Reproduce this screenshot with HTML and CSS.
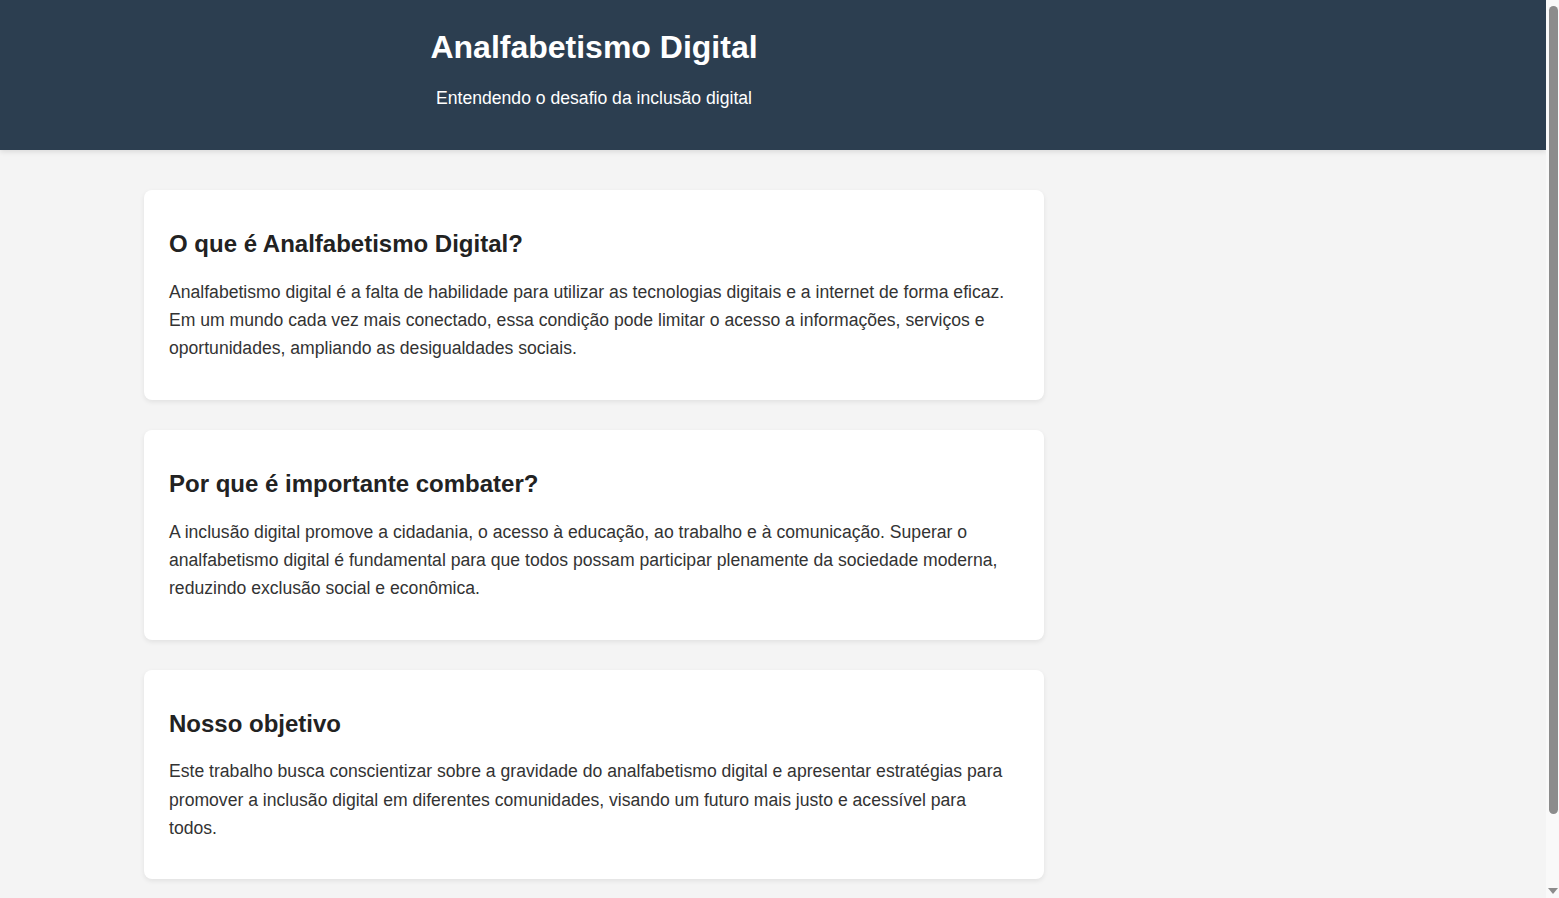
FILE: index.html
```html
<!DOCTYPE html>
<html lang="pt-BR">
<head>
<meta charset="UTF-8">
<title>Analfabetismo Digital</title>
<link rel="stylesheet" href="styles.css">
</head>
<body>
<header class="site-header">
  <div class="container header-inner">
    <h1 class="site-title">Analfabetismo Digital</h1>
    <p class="site-subtitle">Entendendo o desafio da inclusão digital</p>
  </div>
</header>
<main class="container content">
  <section class="card">
    <h2 class="card-title">O que é Analfabetismo Digital?</h2>
    <p class="card-text">Analfabetismo digital é a falta de habilidade para utilizar as tecnologias digitais e a internet de forma eficaz. Em um mundo cada vez mais conectado, essa condição pode limitar o acesso a informações, serviços e oportunidades, ampliando as desigualdades sociais.</p>
  </section>
  <section class="card">
    <h2 class="card-title">Por que é importante combater?</h2>
    <p class="card-text">A inclusão digital promove a cidadania, o acesso à educação, ao trabalho e à comunicação. Superar o analfabetismo digital é fundamental para que todos possam participar plenamente da sociedade moderna, reduzindo exclusão social e econômica.</p>
  </section>
  <section class="card">
    <h2 class="card-title">Nosso objetivo</h2>
    <p class="card-text">Este trabalho busca conscientizar sobre a gravidade do analfabetismo digital e apresentar estratégias para promover a inclusão digital em diferentes comunidades, visando um futuro mais justo e acessível para todos.</p>
  </section>
</main>
<div class="fake-scrollbar" aria-hidden="true">
  <div class="fake-thumb"></div>
  <div class="fake-arrow"></div>
</div>
</body>
</html>
```
FILE: styles.css
```css
* { box-sizing: border-box; }

body {
  margin: 0 13px 0 0;
  font-family: "Liberation Sans", Arial, sans-serif;
  background: #f4f4f4;
  color: #333;
  line-height: 1.6;
}

.container {
  width: 900px;
  margin-left: 144px;
}

.site-header {
  background: #2c3e50;
  color: #fff;
  height: 150px;
  box-shadow: 0 2px 5px rgba(0, 0, 0, 0.1);
}

.header-inner {
  text-align: center;
  padding-top: 29px;
}

.site-title {
  margin: 0;
  font-size: 32px;
  line-height: normal;
  font-weight: bold;
}

.site-subtitle {
  margin: 22px 0 0;
  font-size: 17.6px;
  line-height: normal;
}

.content {
  padding: 40px 0 100px;
  display: flex;
  flex-direction: column;
  gap: 30px;
}

.card {
  background: #fff;
  border-radius: 8px;
  padding: 20px 30px 20px 25px;
  box-shadow: 0 2px 5px rgba(0, 0, 0, 0.08);
}

.card-title {
  margin: 19.92px 0;
  font-size: 24px;
  line-height: normal;
  color: #222;
}

.card-text {
  margin: 0 0 17.6px;
  font-size: 17.6px;
  line-height: 1.6;
  color: #333;
}

.fake-scrollbar {
  position: fixed;
  top: 0;
  right: 0;
  width: 13px;
  height: 100vh;
  background: #f9f9f9;
}

.fake-thumb {
  position: absolute;
  top: 6px;
  left: 3px;
  width: 9px;
  height: 808px;
  background: #8c8c8c;
  border-radius: 5px;
}

.fake-arrow {
  position: absolute;
  bottom: 4px;
  left: 2px;
  width: 0;
  height: 0;
  border-left: 5px solid transparent;
  border-right: 5px solid transparent;
  border-top: 6px solid #8c8c8c;
}
```
